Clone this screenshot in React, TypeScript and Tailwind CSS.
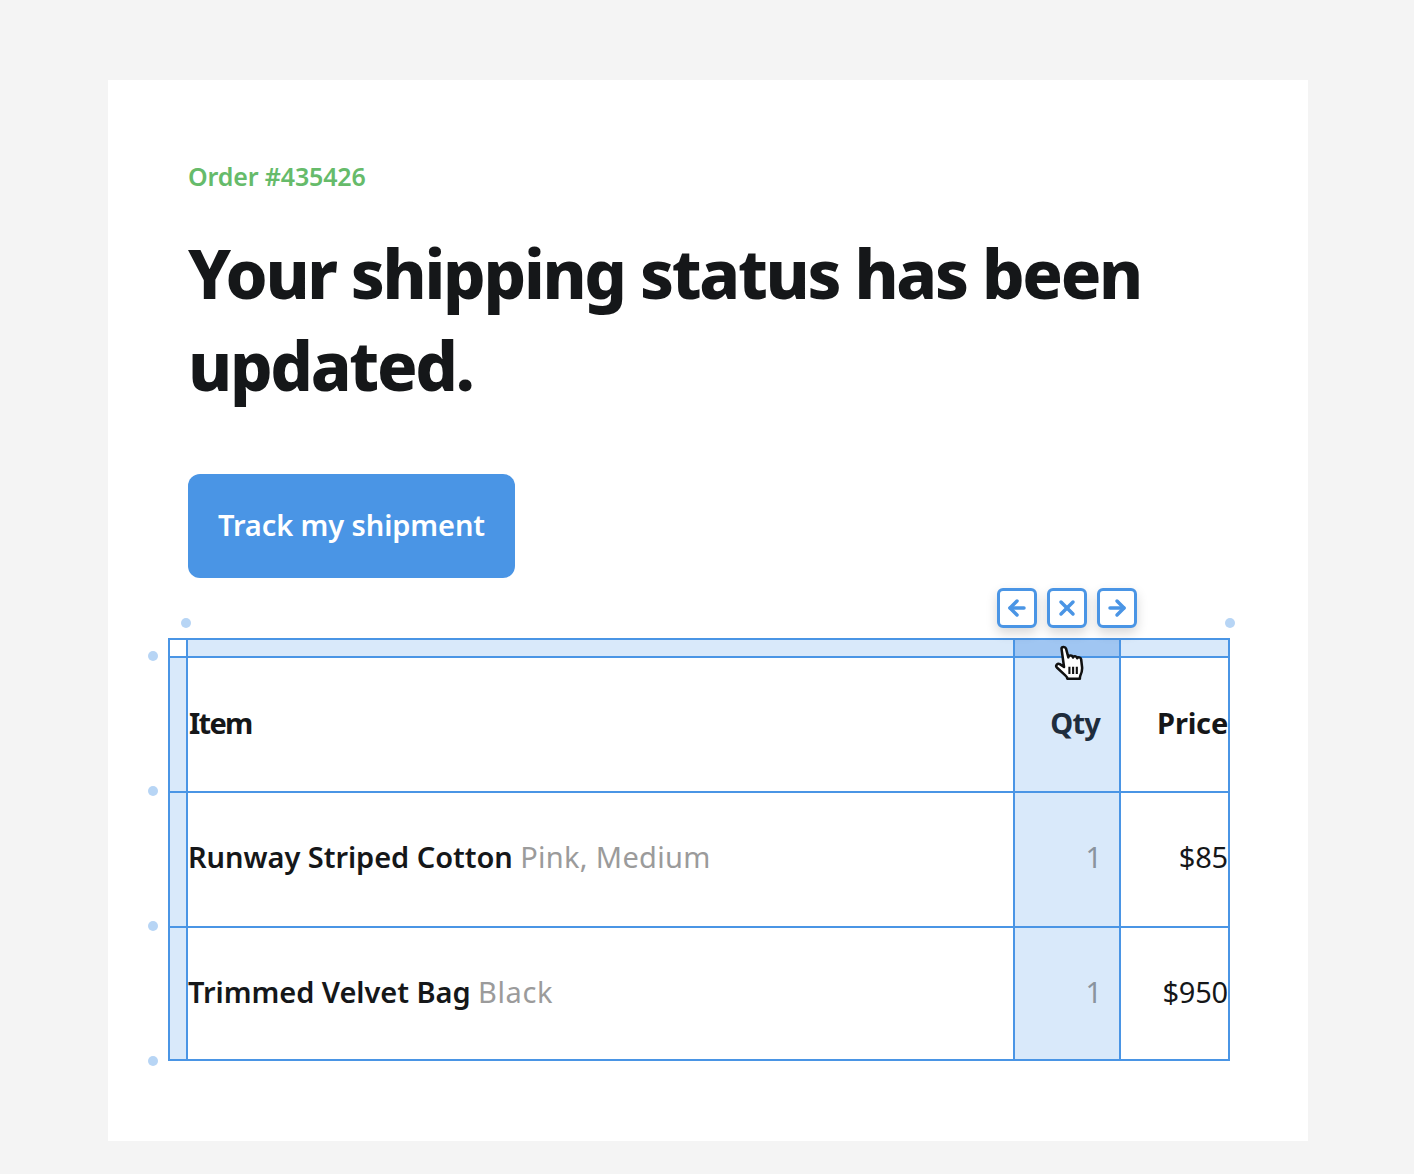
import { ArrowLeft, ArrowRight, X } from "lucide-react";

const font = "font-['Noto_Sans','Open_Sans',sans-serif]";
const lineRB = "border-r-2 border-b-2 border-[#4a95e5]";

function HandCursor() {
  return (
    <svg width="34" height="38" viewBox="0 0 32 36" className="absolute left-[1054px] top-[645px]">
      <path
        d="M7 3.5c0-2 3.6-2.4 4.3 0l2.2 8.2c.2-2.4 3.9-2.2 4.4.2.4-1.800 3.600-1.600 4 .6.6-1.400 3.400-1 3.700 1l.9 7.500c.3 3-.5 5.600-1.700 8.200-.3.8-.4 1.600-.4 2.800H12.600c-.2-1.400-.9-2.200-2-3.200L2.600 21.300c-1.700-1.800.6-4.400 2.800-3.200l4 2.700L7 3.500z"
        fill="#fff"
        stroke="#111"
        strokeWidth="2.4"
        strokeLinejoin="round"
      />
      <path d="M14.500 20.500v7M18 20.500v7M21.500 20.500v7" stroke="#111" strokeWidth="2" fill="none" />
    </svg>
  );
}

function ToolButton({ children }: { children: React.ReactNode }) {
  return (
    <button className="w-10 h-10 flex items-center justify-center rounded-[6px] border-[3px] border-[#4a95e5] bg-white text-[#4a95e5] shadow-[0_5px_12px_rgba(0,0,0,0.16)]">
      {children}
    </button>
  );
}

function Dot({ className }: { className: string }) {
  return <span className={`absolute w-2.5 h-2.5 rounded-full bg-[#b7d5f5] ${className}`} />;
}

export default function App() {
  return (
    <div className={`relative w-[1414px] h-[1174px] bg-[#f4f4f4] pt-20 pl-[108px] overflow-hidden ${font}`}>
      <div className="w-[1200px] h-[1061px] bg-white pl-20 pt-[76px]">
        <div className="text-[25px] leading-[40px] font-semibold text-[#66bb6a] tracking-[-0.15px]">Order #435426</div>

        <h1 className="mt-[31px] w-[1040px] text-[67px] leading-[92px] font-extrabold text-[#151719] tracking-[-2.27px]">
          Your shipping status has been updated.
        </h1>

        <button className="mt-[63px] block w-[327px] h-[104px] pb-[2px] rounded-xl bg-[#4a95e5] text-white text-[29px] font-semibold tracking-[-0.1px]">
          Track my shipment
        </button>

        <div className="mt-[60px] -ml-5 w-[1062px] h-[423px] border-t-2 border-l-2 border-[#4a95e5] grid grid-cols-[18px_827px_106px_109px] grid-rows-[18px_135px_135px_133px]">
          {/* handle row */}
          <div className={lineRB} />
          <div className={`${lineRB} bg-[#d9e9fa]`} />
          <div className={`${lineRB} bg-[#a0c6f2]`} />
          <div className={`${lineRB} bg-[#d9e9fa]`} />

          {/* header */}
          <div className={`${lineRB} bg-[#d9e9fa]`} />
          <div className={`${lineRB} flex items-center pl-px pb-[3px] text-[29px] font-bold text-[#151719] tracking-[-1.7px]`}>Item</div>
          <div className={`${lineRB} bg-[#d9e9fa] flex items-center justify-end pr-[19px] pb-[3px] text-[29px] font-bold text-[#1f2d3d] tracking-[-0.8px]`}>Qty</div>
          <div className={`${lineRB} flex items-center justify-end pb-[3px] text-[29px] font-bold text-[#151719] tracking-[-0.2px]`}>Price</div>

          {/* rows */}
          <div className={`${lineRB} bg-[#d9e9fa]`} />
          <div className={`${lineRB} flex items-center pb-[5px] text-[29px] whitespace-pre`}>
            <span className="font-semibold text-[#151719] tracking-[-0.05px]">Runway Striped Cotton </span>
            <span className="text-[#9b9b9b] tracking-[0.3px]">Pink, Medium</span>
          </div>
          <div className={`${lineRB} bg-[#d9e9fa] flex items-center justify-end pr-[17px] pb-[5px] text-[29px] text-[#8a949e]`}>1</div>
          <div className={`${lineRB} flex items-center justify-end pb-[5px] text-[29px] text-[#151719] tracking-[-0.2px]`}>$85</div>

          <div className={`${lineRB} bg-[#d9e9fa]`} />
          <div className={`${lineRB} flex items-center pb-[3px] text-[29px] whitespace-pre`}>
            <span className="font-semibold text-[#151719] tracking-[-0.05px]">Trimmed Velvet Bag </span>
            <span className="text-[#9b9b9b] tracking-[0.6px]">Black</span>
          </div>
          <div className={`${lineRB} bg-[#d9e9fa] flex items-center justify-end pr-[17px] pb-[3px] text-[29px] text-[#8a949e]`}>1</div>
          <div className={`${lineRB} flex items-center justify-end pb-[3px] text-[29px] text-[#151719] tracking-[-0.2px]`}>$950</div>
        </div>
      </div>

      {/* column toolbar */}
      <div className="absolute left-[997px] top-[588px] flex gap-2.5">
        <ToolButton><ArrowLeft size={24} strokeWidth={3.5} /></ToolButton>
        <ToolButton><X size={24} strokeWidth={3.5} /></ToolButton>
        <ToolButton><ArrowRight size={24} strokeWidth={3.5} /></ToolButton>
      </div>

      <Dot className="left-[181px] top-[618px]" />
      <Dot className="left-[1225px] top-[618px]" />
      <Dot className="left-[148px] top-[651px]" />
      <Dot className="left-[148px] top-[786px]" />
      <Dot className="left-[148px] top-[921px]" />
      <Dot className="left-[148px] top-[1056px]" />

      <HandCursor />
    </div>
  );
}
